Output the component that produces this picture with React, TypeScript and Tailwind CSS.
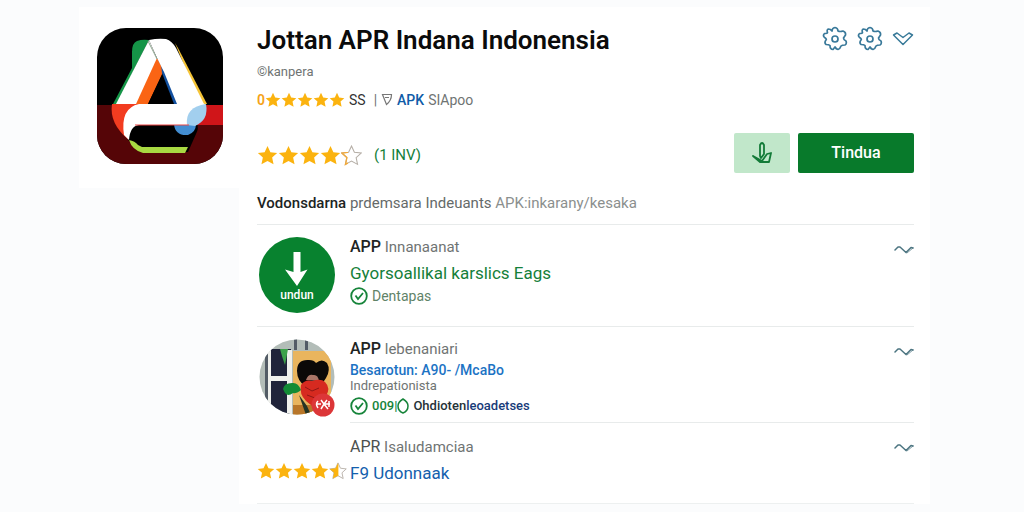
import { useId } from 'react'

const STAR = 'M12 1.2l3.3 7.100 7.700.9-5.700 5.200 1.600 7.700L12 18.300l-6.900 3.800 1.600-7.700L1 9.200l7.700-.9z'

type Fill = 'full' | 'half' | 'hint'

function Star({ fill = 'full', className }: { fill?: Fill; className: string }) {
  const id = useId()
  const width = fill === 'full' ? 24 : fill === 'half' ? 12.5 : 8
  return (
    <svg viewBox="0 0 24 24" className={className} aria-hidden="true">
      <clipPath id={id}>
        <rect width={width} height="24" />
      </clipPath>
      {fill !== 'full' && <path d={STAR} fill="#fff" stroke="#b5aea6" strokeWidth="1.2" />}
      <path
        d={STAR}
        fill={fill === 'hint' ? 'none' : '#fbb30f'}
        stroke={fill === 'hint' ? '#f0a93c' : 'none'}
        strokeWidth="1.6"
        clipPath={`url(#${id})`}
      />
    </svg>
  )
}

function AppLogo() {
  return (
    <svg viewBox="0 0 126 136" className="w-full" role="img" aria-label="App logo">
      <clipPath id="logo-shape">
        <rect width="126" height="136" rx="29" />
      </clipPath>
      <g clipPath="url(#logo-shape)">
        <rect width="126" height="136" fill="#000" />
        <rect y="77" width="126" height="59" fill="#550507" />
        <path d="M90 77h36v20H90z" fill="#d01519" />
        <path d="M15 76h32L32 112Q12 96 15 76z" fill="#f23c20" />
        <path d="M40 13Q45 11 52 12L20 76h-4L35 40V24Q35 15 40 13z" fill="#159447" />
        <path d="M78 15L81 20 110 76h-7z" fill="#f5c437" />
        <path d="M52 12L19 76h22L61 33z" fill="#fff" />
        <path d="M60 30L67 43 51 76H39z" fill="#fa6414" />
        <path d="M66 44L80 76H51z" fill="#000" />
        <path d="M64 36l5 4 13 36h-5L65 45z" fill="#1351a0" />
        <path d="M52 12Q61 10 69 11 75 13 79 20L107 76H80L67 44 60 30z" fill="#fff" />
        <path d="M51 13l9 18" stroke="#8da78f" strokeWidth="1" />
        <path d="M34 96h66q2 4-1 10l-8 18H46L31 112z" fill="#000" />
        <path d="M77 96q1 12 14 11 8-3 8-11z" fill="#438ed2" />
        <path d="M27 107Q23 80 42 76h38q10-4 28 0 4 14-16 21H42q-9 1-10 15z" fill="#fff" />
        <path d="M90 97Q88 79 109 76q3 16-11 22z" fill="#a2cfee" />
        <path d="M38 97h54" stroke="#e94542" strokeWidth="1.2" />
        <path d="M32 112q6 1 9 5l4 2h46l-3 6H46q-11-3-14-13z" fill="#a8d942" />
      </g>
    </svg>
  )
}

function Cog() {
  return (
    <svg viewBox="0 0 26 26" className="h-[26px] w-[26px]" fill="none" stroke="#39799a" strokeWidth="1.7" strokeLinejoin="round">
      <path d="M10 5q0-3 3-3.500 3 .5 3 3.500 2 1 5 0 3 1 2.500 4l-2 3q0 2 2.500 3 1 3-1 4-3 0-4 1-1 3-3 3.500-2-.5-3-2.500l-2 2.500q-3 0-3-4-1-1-4-1-2-2 0-4.500 1-1-1.500-2.500-2-2 0-4 3 0 3-1-1-3 1-3.500 2 0 3.500 2z" />
      <circle cx="13" cy="13" r="3" />
    </svg>
  )
}

function Squiggle() {
  return (
    <svg viewBox="0 0 20 10" className="h-[10px] w-5" fill="none" stroke="#4b7480" strokeWidth="1.500" strokeLinejoin="round" strokeLinecap="round">
      <path d="M1 5l3-3h2l6 5.500 5-5 2 .5" />
      <path d="M13 8l6-5" strokeWidth="0.7" />
    </svg>
  )
}

function Check() {
  return (
    <svg viewBox="0 0 18 18" className="h-[18px] w-[18px] shrink-0" fill="none" stroke="#16843a" strokeWidth="1.800" aria-hidden="true">
      <circle cx="9" cy="9" r="7.800" />
      <path d="M5.500 8.500l2.500 3.500 5-6" />
    </svg>
  )
}

function Portrait() {
  return (
    <div className="relative h-[76px] w-[76px]">
      <svg viewBox="0 0 76 76" className="h-full w-full" role="img" aria-label="Portrait">
        <clipPath id="portrait-shape">
          <circle cx="38" cy="38" r="37.500" />
        </clipPath>
        <g clipPath="url(#portrait-shape)">
          <rect width="76" height="76" fill="#b3bdb8" />
          <path d="M6 8h3v68H6zM35 0h3v11h-3zM46 0h3v11h-3z" fill="#535c66" />
          <rect x="12" y="10" width="20" height="66" fill="#20243a" />
          <path d="M9 10h3v66H9zM28 11h5v65h-5zM10 37h23v5H10z" fill="#f0f1ed" />
          <path d="M21 10h8l-3 16q-3-8-5-16z" fill="#3da24a" />
          <rect x="34" y="12" width="38" height="64" fill="#e9b55e" />
          <path d="M34 66h20v10H34z" fill="#b87629" />
          <path d="M38 32q0-12 12-11 5 0 7 3 6-5 11 0 4 7-1 15l-6 9H47q-9-6-9-16z" fill="#0b0908" />
          <path d="M47 41q2-6 7-5 5-1 6 6z" fill="#a97567" />
          <path d="M42 46q4-6 11-4 9-3 13 1 6 6 1 14l-9 14-11-9q-7-7-5-16z" fill="#d62a20" />
          <path d="M46 48l7 4 7-3M48 56l8 3" stroke="#8f1715" fill="none" />
          <path d="M24 50q1-6 9-6 6-1 9 7-5 4-8 3-5 4-8 0z" fill="#128b35" />
          <path d="M40 56l8 11 4 9h-5z" fill="#243425" />
        </g>
      </svg>
      <svg viewBox="0 0 24 24" className="absolute right-0 bottom-[-2px] h-6 w-6" fill="none" aria-hidden="true">
        <circle cx="12" cy="12" r="11.500" fill="#dc3638" />
        <path d="M7 8q-3 3 0 7M6 11h4M10 7l3 4 3-4M10 16l3-5 4 5M14 11h5M18 8v6" stroke="#fff" strokeWidth="1.500" />
      </svg>
    </div>
  )
}

function ExpandButton() {
  return (
    <button type="button" aria-label="Expand" className="mt-5 self-start">
      <Squiggle />
    </button>
  )
}

export default function App() {
  return (
    <div className="min-h-screen bg-[#fbfcfd] pt-[7px] pr-[94px] pb-2 pl-[79px] font-[Roboto,sans-serif] text-[#6f7473]">
      <div className="flex items-start">
        <aside className="w-[160px] shrink-0 bg-white pt-[21px] pr-4 pb-6 pl-[18px]">
          <AppLogo />
        </aside>

        <main className="min-w-0 flex-1 bg-white pr-4 pl-[18px]">
          <header className="flex items-start justify-between pt-[15px]">
            <div>
              <h1 className="text-[26px] leading-9 font-semibold text-[#0b0b0b]">Jottan APR Indana Indonensia</h1>
              <p className="text-[13px] leading-7">©kanpera</p>
              <div className="flex h-7 items-center text-sm">
                <span className="font-semibold text-[#f5a31a]">0</span>
                <span className="flex">
                  {[0, 1, 2, 3, 4].map((i) => (
                    <Star key={i} className="h-4 w-4" />
                  ))}
                </span>
                <span className="ml-1 text-[#333]">SS</span>
                <span className="ml-2">|</span>
                <svg viewBox="0 0 12 14" className="mr-1 ml-1 h-[14px] w-3" fill="none" stroke="#777" strokeWidth="1.200" aria-hidden="true">
                  <path d="M1.500 1.500h9q0 6-5 10zM4 4.500h4" />
                </svg>
                <a href="#apk" className="font-medium text-[#0f5ca8]">APK</a>
                <span className="ml-1">SIApoo</span>
              </div>
            </div>
            <div className="flex items-center gap-[9px] pt-1">
              <button type="button" aria-label="Settings"><Cog /></button>
              <button type="button" aria-label="Preferences"><Cog /></button>
              <button type="button" aria-label="More">
                <svg viewBox="0 0 22 16" className="h-4 w-[22px]" fill="none" stroke="#397a99" strokeWidth="1.500" strokeLinejoin="round">
                  <path d="M1.500 4L5 2l6 4.500L17 2l3.500 2L11 13.500z" />
                </svg>
              </button>
            </div>
          </header>

          <section className="flex items-center justify-between pt-[19px]">
            <div className="flex items-center pt-1">
              {[0, 1, 2, 3].map((i) => (
                <Star key={i} className="h-[21px] w-[21px]" />
              ))}
              <Star fill="hint" className="h-[21px] w-[21px]" />
              <span className="ml-3 text-[15px] text-[#15803a]">(1 INV)</span>
            </div>
            <div className="flex gap-2">
              <button type="button" aria-label="Download" className="flex h-10 w-14 items-center justify-center rounded-xs bg-[#c1e7ca]">
                <svg viewBox="0 0 22 24" className="h-6 w-[22px]" fill="none" stroke="#137b38" strokeWidth="1.800" strokeLinejoin="round" strokeLinecap="round">
                  <path d="M9 15V4q2-4 4 0v9l-3 4zM2 15l7 6h9l2-9-4 1-5 7-9-5" />
                </svg>
              </button>
              <button type="button" className="h-10 w-[116px] rounded-xs bg-[#087a2b] text-base font-medium text-white">Tindua</button>
            </div>
          </section>

          <p className="pt-[18px] pb-[9px] text-[15px] leading-6 text-[#8b8f8e]">
            <span className="font-medium text-[#202423]">Vodonsdarna</span>{' '}
            <span className="text-[#656a69]">prdemsara Indeuants</span> APK:inkarany/kesaka
          </p>

          <article className="flex h-[102px] border-t border-[#e8ebeb]">
            <div className="w-[93px] shrink-0 pt-3 pl-[2px]">
              <button type="button" className="flex h-[76px] w-[76px] flex-col items-center rounded-full bg-[#08822f] pt-[14px] text-xs leading-4 font-medium text-white">
                <svg viewBox="0 0 26 36" className="h-9 w-[26px] shrink-0" fill="#fff" aria-hidden="true">
                  <path d="M9.500 1h7v20l7-2.500L13 35 1 18.500 9.500 21z" />
                </svg>
                undun
              </button>
            </div>
            <div className="flex-1 pt-[10px]">
              <h2 className="text-[15px] leading-6">
                <span className="text-base font-medium text-[#202423]">APP</span> Innanaanat
              </h2>
              <a href="#app" className="block text-[17px] leading-7 text-[#15803a]">Gyorsoallikal karslics Eags</a>
              <p className="flex items-center gap-1 text-sm leading-[18px] text-[#5f8368]"><Check />Dentapas</p>
            </div>
            <ExpandButton />
          </article>

          <article className="flex h-24 border-t border-[#e8ebeb]">
            <div className="w-[93px] shrink-0 pt-3 pl-[2px]">
              <Portrait />
            </div>
            <div className="flex-1 pt-[10px]">
              <h2 className="text-[15px] leading-5">
                <span className="text-base font-medium text-[#202423]">APP</span> lebenaniari
              </h2>
              <a href="#besarotun" className="block text-sm leading-[18px] font-medium text-[#1c73c4]">Besarotun: A90- /McaBo</a>
              <p className="text-[13px] leading-[14px]">Indrepationista</p>
              <p className="mt-1 flex items-center text-[13px] leading-[18px] font-medium">
                <Check />
                <span className="ml-1 text-[#16843a]">009|</span>
                <svg viewBox="0 0 12 18" className="h-[18px] w-3" fill="none" stroke="#16843a" strokeWidth="1.500" aria-hidden="true">
                  <path d="M6 2q5 3 5 7 0 5-5 7-5-2-5-7 0-4 5-7z" />
                </svg>
                <span className="ml-1 text-[#263238]">Ohdioten</span>
                <a href="#leoadetses" className="text-[#183b79]">leoadetses</a>
              </p>
            </div>
            <ExpandButton />
          </article>

          <article className="flex h-[81px]">
            <div className="flex w-[93px] shrink-0 items-start pt-10">
              {[0, 1, 2, 3].map((i) => (
                <Star key={i} className="h-[18px] w-[18px]" />
              ))}
              <Star fill="half" className="h-[18px] w-[18px]" />
            </div>
            <div className="flex flex-1 border-t border-[#e8ebeb]">
              <div className="flex-1 pt-3">
                <h2 className="text-[15px] leading-[22px]">
                  <span className="text-base text-[#4b504f]">APR</span> Isaludamciaa
                </h2>
                <a href="#udonnaak" className="block text-[17px] leading-7 text-[#1460ad]">F9 Udonnaak</a>
              </div>
              <ExpandButton />
            </div>
          </article>
          <hr className="border-[#edf0f0]" />
        </main>
      </div>
    </div>
  )
}
